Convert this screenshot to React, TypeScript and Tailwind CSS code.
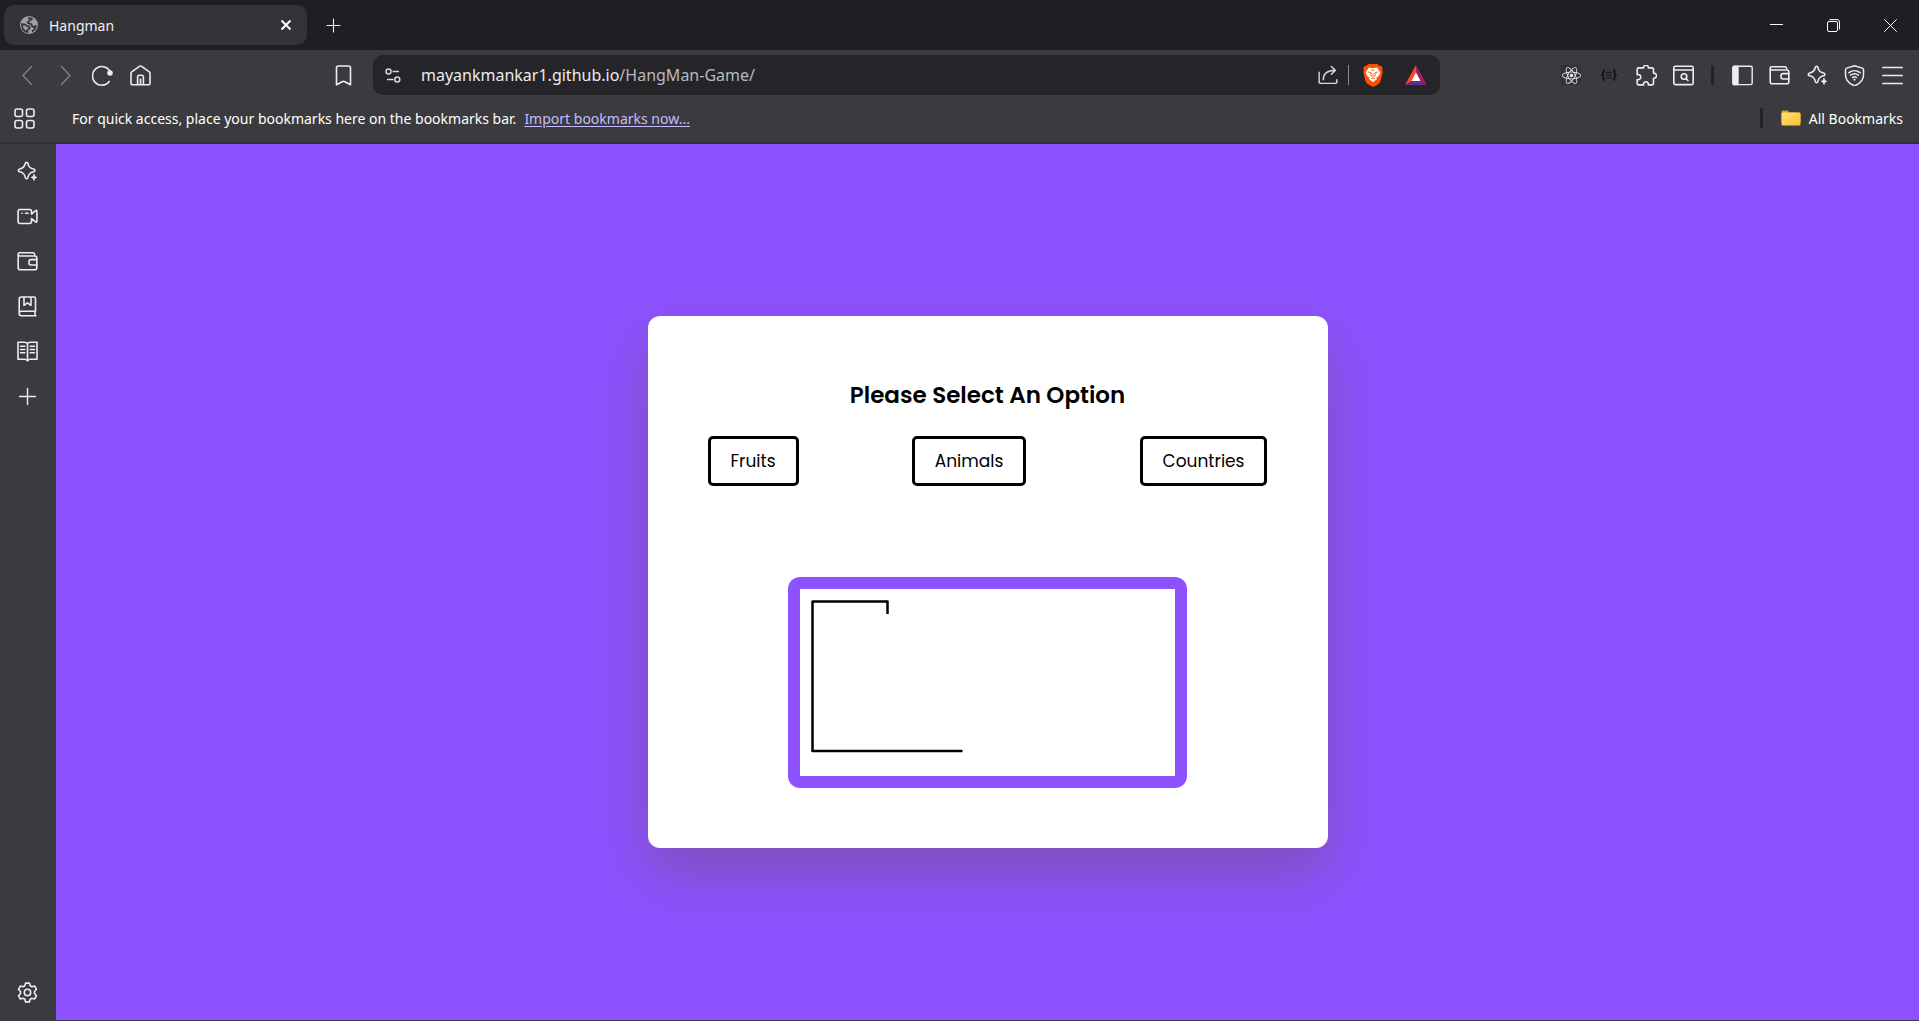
import type { ReactNode } from "react";
import { FaReact } from "react-icons/fa";

const UI_FONT = "font-['Segoe_UI','Noto_Sans',sans-serif]";

function Icon({ size = 21, width = 1.4, children }: { size?: number; width?: number; children: ReactNode }) {
  return (
    <svg
      width={size}
      height={size}
      viewBox="0 0 21 21"
      fill="none"
      stroke="currentColor"
      strokeWidth={width}
      strokeLinecap="round"
      strokeLinejoin="round"
      aria-hidden="true"
      className="shrink-0"
    >
      {children}
    </svg>
  );
}

function IconButton({ label, className = "", children }: { label: string; className?: string; children: ReactNode }) {
  return (
    <button type="button" aria-label={label} className={`flex shrink-0 items-center justify-center ${className}`}>
      {children}
    </button>
  );
}

const SparkleIcon = () => (
  <Icon width={1.6}>
    <path d="M9.6 1.2c.7 0 1.1.5 1.3 1.3.8 3.5 1.9 4.6 5.6 5.5.9.2 1.4.7 1.4 1.4s-.5 1.2-1.4 1.4c-3.7.9-4.8 2-5.6 5.6-.2.8-.6 1.3-1.3 1.3s-1.1-.5-1.3-1.3c-.8-3.6-1.900-4.700-5.500-5.600-.9-.2-1.500-.7-1.500-1.400S1.900 8.200 2.800 8c3.600-.9 4.700-2 5.500-5.500.2-.8.6-1.300 1.300-1.300Z" />
    <path d="M17 13.600c.4 1.800.8 2.200 2.700 2.800-1.900.6-2.300 1-2.700 3-.4-2-.8-2.400-2.700-3 1.900-.6 2.300-1 2.700-2.800Z" fill="currentColor" strokeWidth="1" />
  </Icon>
);

const WalletIcon = () => (
  <Icon width={1.6}>
    <path d="M1.200 3.200v13.600c0 1.300.7 2 2 2h14.600c1.300 0 2-.7 2-2V7c0-1.300-.7-2-2-2H2.600C.7 5 .7 1.800 2.600 1.800h13.200c1 0 1.700.6 1.900 1.600" />
    <path d="M19.800 8.600H14c-1.300 0-2 .7-2 2V12c0 1.300.7 2 2 2h5.800" />
  </Icon>
);

const PlusIcon = ({ size }: { size?: number }) => (
  <Icon size={size}>
    <path d="M10.500 2.500v16M2.500 10.500h16" />
  </Icon>
);

function TabStrip() {
  return (
    <header className="flex h-[50px] shrink-0 bg-[#1f1e23]">
      <div className="my-[5px] ml-1 flex w-[303px] items-center rounded-[10px] bg-[#343338] pr-[11px] pl-4">
        <svg width="18" height="18" viewBox="0 0 18 18" aria-hidden="true">
          <circle cx="9" cy="9" r="9" fill="#9aa0a6" />
          <path d="M2 8.200c2 .3 4-.2 4.300 1.200.2 1.200 1.500.9 2.500 1 1.200.2.800 1.600.2 2.400-.5.700-1.500.7-1.700 1.500l.2 1.700C4.500 15.600 2 13 2 8.200ZM8 2.100c2-.3 3 .3 4 .8-.3 1-1.300 1-2.300 1.300-1.200.4-.7 2-2 2.300.2 1.600 2.800.6 3.700 1.800.7 1 .2 2.500 1.800 2.600 1 .1 1.600-.8 2.700-.9-.7 3-2.200 4.600-3.900 5.400" fill="none" stroke="#343338" strokeWidth="1.700" />
        </svg>
        <span className="ml-[11px] flex-1 text-[14px] text-[#f1f1f3]">Hangman</span>
        <IconButton label="Close tab" className="size-5 text-white">
          <svg width="12" height="12" viewBox="0 0 12 12" stroke="currentColor" strokeWidth="2" aria-hidden="true">
            <path d="M1.500 1.500l9 9M10.500 1.500l-9 9" />
          </svg>
        </IconButton>
      </div>
      <IconButton label="New tab" className="ml-3 w-7 text-[#ededf0]">
        <PlusIcon size={17} />
      </IconButton>
      <div className="ml-auto flex text-white">
        <IconButton label="Minimize" className="w-[57px]">
          <svg width="13" height="13" viewBox="0 0 13 13" stroke="currentColor" aria-hidden="true"><path d="M0 5.500h13" /></svg>
        </IconButton>
        <IconButton label="Restore" className="w-[57px]">
          <svg width="13" height="13" viewBox="0 0 13 13" fill="none" stroke="currentColor" aria-hidden="true">
            <rect x=".5" y="2.500" width="10" height="10" rx="1.500" />
            <path d="M2.500.6h7.500q2.500 0 2.500 2.500v7.400" />
          </svg>
        </IconButton>
        <IconButton label="Close window" className="w-[57px]">
          <svg width="13" height="13" viewBox="0 0 13 13" stroke="currentColor" aria-hidden="true"><path d="M.3.3l12.400 12.400M12.700.3L.3 12.700" /></svg>
        </IconButton>
      </div>
    </header>
  );
}

function AddressBar() {
  return (
    <div className="ml-[11px] flex h-10 flex-1 items-center rounded-[10px] bg-[#252429] text-[#d8d8dc]">
      <IconButton label="Site information" className="ml-3 w-4">
        <svg width="16" height="15" viewBox="0 0 16 15" fill="none" stroke="currentColor" strokeWidth="1.500" aria-hidden="true">
          <circle cx="3.500" cy="3.500" r="2.500" />
          <path d="M7.500 3.500H14M2 11.500h6.500" />
          <circle cx="12.300" cy="11.500" r="2.500" />
        </svg>
      </IconButton>
      <div aria-label="Address" className="ml-5 flex-1 text-base whitespace-nowrap text-[#ececef]">
        mayankmankar1.github.io<span className="text-[#b9b9bf]">/HangMan-Game/</span>
      </div>
      <IconButton label="Share" className="w-5">
        <Icon size={20} width={1.5}>
          <path d="M1.200 7.500v9.800c0 1.300.7 2 2 2h14.600c1.200 0 2-.7 2-2v-1.800M5.500 15.500c0-6 3.500-9.800 12.500-10M14 1.500l4.300 4-4.300 4.300" />
        </Icon>
      </IconButton>
      <span className="ml-[10px] h-5 w-px bg-[#8a8a90]" />
      <IconButton label="Brave Shields" className="ml-[14px] w-5">
        <svg width="20" height="23" viewBox="0 0 20 23" aria-hidden="true">
          <path d="M5.500 0h9l1.700 1.700 2.200.2 1.300 2.700-.5 1.500.5 1.900-2 8.500c-.5 2-1.700 3-3.200 4L10 23l-4.500-2.500c-1.500-1-2.700-2-3.200-4L.3 8l.5-1.900L.3 4.600 1.600 1.900l2.200-.2Z" fill="#ff5000" />
          <path d="M6 3.500l4 .7 4-.7 3.300 4.700-.8 2.500-1.600 2.300-1.600.6L14 15l-4 3.200L6 15l.7-1.400-1.600-.6-1.600-2.300-.8-2.500Z" fill="#fff" />
          <path d="M4.800 7.800l3.500 1.200-.6 1.700.8 2M15.200 7.800l-3.500 1.200.6 1.700-.8 2M8.500 5.800L10 6.600l1.500-.8M10 9.500v3.500M8.200 14.900l1.800-1 1.800 1" fill="none" stroke="#ff5000" strokeWidth=".9" />
        </svg>
      </IconButton>
      <IconButton label="Brave Rewards" className="mr-[13px] ml-[22px] w-[22px]">
        <svg width="22" height="20" viewBox="0 0 22 20" aria-hidden="true">
          <path d="M11 0 0 20l7-4 4-7Z" fill="#ff4724" />
          <path d="M11 0l11 20-7-4-4-7Z" fill="#9e1f63" />
          <path d="M0 20h22l-7-4H7Z" fill="#662d91" />
          <path d="M11 7.500 6.500 16h9Z" fill="#fff" />
        </svg>
      </IconButton>
    </div>
  );
}

function Toolbar() {
  return (
    <div className="flex h-[50px] shrink-0 items-center bg-[#3b3a3e] pr-2 text-[#ededf0]">
      <IconButton label="Back" className="ml-2 w-[38px] text-[#808084]">
        <Icon><path d="M14.500 1.500l-8.500 9 8.500 9" /></Icon>
      </IconButton>
      <IconButton label="Forward" className="w-[38px] text-[#808084]">
        <Icon><path d="M6.500 1.500l8.500 9-8.500 9" /></Icon>
      </IconButton>
      <IconButton label="Reload" className="w-9">
        <Icon width={1.6}>
          <path d="M18.700 8.200A9.300 9.300 0 1 0 17.200 16.500" />
          <circle cx="18" cy="8" r="2" fill="currentColor" />
        </Icon>
      </IconButton>
      <IconButton label="Home" className="w-10">
        <Icon width={1.6}>
          <path d="M1 8.400v9.600c0 1.200.6 1.800 1.800 1.800h15.400c1.200 0 1.800-.6 1.800-1.800V8.400c0-.8-.3-1.300-1-1.800l-7.400-5.200c-.8-.5-1.400-.5-2.200 0L2 6.600c-.7.5-1 1-1 1.800ZM7.600 19.500V12c0-1.200.6-1.800 1.800-1.800h2.200c1.200 0 1.800.6 1.800 1.800v7.500M10.500 14v5.500" />
        </Icon>
      </IconButton>
      <IconButton label="Bookmark this page" className="ml-[164px] w-[38px]">
        <Icon width={1.6}><path d="M3.500 19.800V3c0-1.300.7-2 2-2h10c1.300 0 2 .7 2 2v16.800l-6.200-3.300c-.5-.3-1.100-.3-1.600 0Z" /></Icon>
      </IconButton>
      <AddressBar />
      <div className="ml-28 flex items-center">
        <IconButton label="React Developer Tools" className="w-[38px]">
          <span className="flex size-5 items-center justify-center bg-[#333236]"><FaReact size={19} /></span>
        </IconButton>
        <IconButton label="JSON viewer" className="w-[37px] text-[#151517]">
          <svg width="16" height="12" viewBox="0 0 17 13" fill="none" stroke="currentColor" strokeWidth="2" aria-hidden="true">
            <path d="M4 1C2.400 1 2.400 2 2.400 3.500S2.300 6 1 6.500c1.300.5 1.400 1.500 1.400 3S2.400 12 4 12M13 1c1.600 0 1.600 1 1.600 2.500S14.700 6 16 6.500c-1.300.5-1.400 1.500-1.400 3S14.600 12 13 12" />
            <path d="M5.500 3.500h6M5.500 6.500h6M5.500 9.500h6" strokeDasharray="1.500 .7" strokeWidth="1.500" />
          </svg>
        </IconButton>
        <IconButton label="Extensions" className="w-[38px]">
          <Icon width={1.6}>
            <path d="M1.200 4.400c0-1 .5-1.500 1.500-1.500h4.900c-.3-1.600.9-2.600 2.400-2.600s2.700 1 2.400 2.600h3.300c1.200 0 1.800.6 1.800 1.800v3.500c1.600-.2 3 .9 3 2.500s-1.300 2.700-3 2.500v4.900c0 1.200-.6 1.800-1.800 1.800h-3.400c.4-1.900-.7-3.100-2.300-3.100s-2.800 1.200-2.400 3.100H2.900c-1.100 0-1.700-.6-1.700-1.700v-3.600c2.300.5 3.600-.7 3.600-2.500s-1.500-3-3.600-2.500Z" />
          </Icon>
        </IconButton>
        <IconButton label="Search tabs" className="w-[37px]">
          <Icon width={1.6}>
            <rect x=".8" y="1.200" width="19.400" height="18.400" rx="1.500" />
            <path d="M1 5h19" />
            <circle cx="11" cy="11.500" r="2.800" />
            <path d="M13.200 13.700l1.800 1.800" />
          </Icon>
        </IconButton>
        <span className="mx-[9px] h-5 w-[3px] rounded bg-[#232227]" />
        <IconButton label="Show sidebar" className="w-[38px]">
          <Icon>
            <rect x=".8" y="1.200" width="19.400" height="18.400" rx="1.500" />
            <path d="M1.500 1.500h4.500v18H1.500Z" fill="currentColor" />
          </Icon>
        </IconButton>
        <IconButton label="Wallet" className="w-[37px]"><WalletIcon /></IconButton>
        <IconButton label="Leo AI" className="w-[38px]"><SparkleIcon /></IconButton>
        <IconButton label="VPN" className="w-[37px]">
          <Icon width={1.5}>
            <path d="M10.500.7 2.700 3.100c-.8.3-1.200.8-1.200 1.700v5.200c0 4.700 3 8 7.700 10.200.9.4 1.700.4 2.600 0 4.700-2.200 7.700-5.500 7.700-10.200V4.800c0-.9-.4-1.400-1.200-1.700Z" />
            <path d="M4.800 7.800c3.400-2.800 8-2.800 11.400 0M6.700 10.200c2.300-1.800 5.300-1.800 7.600 0M8.500 12.500c1.300-.9 2.700-.9 4 0" />
            <path d="M10.500 14.600v.2" strokeWidth="2" />
          </Icon>
        </IconButton>
        <IconButton label="Menu" className="w-[38px]">
          <Icon width={1.6}><path d="M.8 2.500h19.400M.8 10.500h19.400M.8 18.500h19.400" /></Icon>
        </IconButton>
      </div>
    </div>
  );
}

function BookmarksBar() {
  return (
    <div className="flex h-11 shrink-0 items-center border-b-2 border-[#302f33] bg-[#3b3a3e] pr-4 pb-1.5 pl-[14px] text-[14px] text-white">
      <IconButton label="Apps" className="w-5 text-[#ededf0]">
        <Icon width={1.6}>
          <rect x="1" y="1" width="7.500" height="7.500" rx="2" />
          <rect x="12.500" y="1" width="7.500" height="7.500" rx="2" />
          <rect x="1" y="12.500" width="7.500" height="7.500" rx="2" />
          <rect x="12.500" y="12.500" width="7.500" height="7.500" rx="2" />
        </Icon>
      </IconButton>
      <span className="ml-[38px] whitespace-nowrap">For quick access, place your bookmarks here on the bookmarks bar.</span>
      <a href="#import" className="ml-2 whitespace-nowrap text-[#c3bdff] underline underline-offset-2">Import bookmarks now...</a>
      <span className="ml-auto h-5 w-[3px] rounded bg-[#232227]" />
      <button type="button" className="ml-[18px] flex items-center gap-2 whitespace-nowrap">
        <svg width="20" height="16" viewBox="0 0 20 16" aria-hidden="true">
          <defs>
            <linearGradient id="folder" x1="0" y1="0" x2="1" y2="1">
              <stop offset="0" stopColor="#ffe07a" />
              <stop offset="1" stopColor="#fbc02d" />
            </linearGradient>
          </defs>
          <path d="M.5 2Q.5.5 2 .5h4.500l2 2H18q1.500 0 1.500 1.500v9H.5Z" fill="#dfa010" />
          <rect x=".5" y="2.500" width="19" height="13" rx="1.500" fill="url(#folder)" />
        </svg>
        All Bookmarks
      </button>
    </div>
  );
}

function Sidebar() {
  return (
    <nav aria-label="Sidebar" className="flex w-14 shrink-0 flex-col bg-[#3b3a3e] pt-[5px] pr-0.5 pb-[5px] text-[#ededf0]">
      <IconButton label="Leo AI" className="h-[45px]"><SparkleIcon /></IconButton>
      <IconButton label="Talk" className="h-[45px]">
        <Icon width={1.6}>
          <path d="M3 3.500h9.600c1.200 0 1.900.7 1.900 1.900v2.700l4-3.400c.8-.6 1.400-.4 1.400.6v9.900c0 1-.6 1.300-1.400.6l-4-3.300v3.100c0 1.200-.7 1.900-1.900 1.900H3c-1.200 0-1.900-.7-1.900-1.900V5.400c0-1.200.7-1.900 1.900-1.900ZM5 7.300h.3M8.500 7.300h2.600" />
        </Icon>
      </IconButton>
      <IconButton label="Wallet" className="h-[45px]"><WalletIcon /></IconButton>
      <IconButton label="Bookmarks" className="h-[45px]">
        <Icon width={1.6}>
          <path d="M18.500 15.200V2.500c0-1-.5-1.500-1.500-1.500H4.300C3 1 2.200 1.800 2.200 3.100v14.200c0 1.500.8 2.400 2.200 2.400H19M18.500 15.200H4.300c-2.800 0-2.800 4.500 0 4.500M18 15.200v4.500M7 1v8.400l3.400-2.500 3.600 2.500V1" />
        </Icon>
      </IconButton>
      <IconButton label="Reading list" className="h-[45px]">
        <Icon width={1.6}>
          <path d="M10.500 2.500C9.500 1.500 8.500 1.300 7 1.300H1v17h6.500c1.500 0 2.200.5 3 1.500.8-1 1.500-1.500 3-1.500H20v-17h-6c-1.500 0-2.500.2-3.500 1.200ZM10.500 2.500v17M3.500 5.300h4.300M3.500 8.500h4.300M3.500 11.700h4.300M13.200 5.300h4.300M13.200 8.500h4.300M13.200 11.700h4.300" />
        </Icon>
      </IconButton>
      <IconButton label="Add to sidebar" className="h-[45px]"><PlusIcon /></IconButton>
      <IconButton label="Sidebar settings" className="mt-auto h-[45px]">
        <Icon width={1.6}>
          <path d="M8.600 1.100h3.800l.8 2.700 1.600.9 2.800-.7 1.900 3.300-2 2.200v2l2 2.200-1.900 3.300-2.800-.7-1.600.9-.8 2.700H8.600l-.8-2.700-1.600-.9-2.800.7-1.900-3.300 2-2.200v-2l-2-2.200L3.400 4l2.800.7 1.600-.9Z" />
          <circle cx="10.500" cy="10.500" r="3.200" />
        </Icon>
      </IconButton>
    </nav>
  );
}

function HangmanCard() {
  return (
    <section className="w-[680px] max-w-full rounded-xl bg-white p-[60px] font-['Poppins','Inter',sans-serif] text-black shadow-[0_25px_56px_rgba(100,73,0,0.28)]">
      <h1 className="text-center text-[23px] leading-[38px] font-semibold">Please Select An Option</h1>
      <div className="mt-[22px] flex justify-between">
        {["Fruits", "Animals", "Countries"].map((option) => (
          <button key={option} type="button" className="rounded-[5px] border-3 border-black px-5 py-[10px] text-[17px] leading-6">
            {option}
          </button>
        ))}
      </div>
      <div className="mx-auto mt-[91px] w-[399px] max-w-full rounded-xl bg-[#8c52ff] p-3">
        <svg viewBox="0 0 375 187" fill="none" className="block w-full bg-white" role="img" aria-label="Gallows">
          <path d="M162.500 162H12.500V12.500H87.500V25" stroke="#000" strokeWidth="2.500" strokeLinejoin="round" />
        </svg>
      </div>
    </section>
  );
}

export default function App() {
  return (
    <div className={`flex min-h-screen flex-col ${UI_FONT}`}>
      <TabStrip />
      <Toolbar />
      <BookmarksBar />
      <div className="flex flex-1 border-b border-[#3b3a3e]">
        <Sidebar />
        <main className="flex flex-1 items-center justify-center bg-[#8c52ff]">
          <HangmanCard />
        </main>
      </div>
    </div>
  );
}
